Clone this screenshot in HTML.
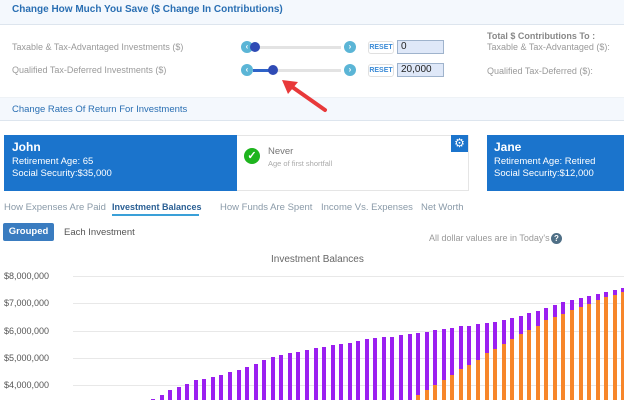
<!DOCTYPE html>
<html><head><meta charset="utf-8"><style>
*{margin:0;padding:0;box-sizing:border-box}
body{width:624px;height:400px;overflow:hidden;background:#fff;font-family:"Liberation Sans",sans-serif;position:relative}
.a{position:absolute;white-space:nowrap}
.hdr{position:absolute;left:0;width:624px;background:#f4f8fd;border-bottom:1px solid #dde5ee}
.lbl{color:#9a9a9a;font-size:9px}
.btn{position:absolute;width:12px;height:12px;border-radius:50%;background:#5bb5d6;color:#fff;font-size:8px;line-height:12px;text-align:center;font-weight:bold}
.track{position:absolute;height:3px;background:#e3e3e3}
.thumb{position:absolute;width:10px;height:10px;border-radius:50%;background:#2f4bb5}
.reset{position:absolute;width:26px;height:13px;border:1px solid #e0e0e0;border-radius:3px;background:#fff;color:#3a8ad6;font-size:7px;text-align:center;line-height:12px;font-weight:bold}
.inp{position:absolute;width:47px;height:14px;background:#dfe8f8;border:1px solid #9fb3cc;font-size:10px;padding-left:3px;line-height:12px;color:#222}
.card{position:absolute;background:#1b74cc;color:#fff}
.tab{position:absolute;top:202px;font-size:9.5px;color:#8a9aa8}
.gl{position:absolute;left:73px;width:551px;height:1px;background:#e8e8e8}
.yl{position:absolute;left:4px;font-size:9px;color:#555}
</style></head><body>
<div class="hdr" style="top:0;height:25px"></div>
<div class="a" style="left:12px;top:4px;font-size:10px;color:#2a6fb3;font-weight:bold">Change How Much You Save ($ Change In Contributions)</div>
<div class="a lbl" style="left:12px;top:42px">Taxable &amp; Tax-Advantaged Investments ($)</div>
<div class="a lbl" style="left:12px;top:65px">Qualified Tax-Deferred Investments ($)</div>
<div class="track" style="left:253px;top:46px;width:88px"></div>
<div class="track" style="left:253px;top:69px;width:88px"></div>
<div class="a" style="left:253px;top:69px;width:20px;height:3px;background:#2f63c8"></div>
<div class="btn" style="left:241px;top:41px">‹</div>
<div class="btn" style="left:344px;top:41px">›</div>
<div class="btn" style="left:241px;top:64px">‹</div>
<div class="btn" style="left:344px;top:64px">›</div>
<div class="thumb" style="left:250px;top:42px"></div>
<div class="thumb" style="left:268px;top:65px"></div>
<div class="reset" style="left:368px;top:41px">RESET</div>
<div class="reset" style="left:368px;top:64px">RESET</div>
<div class="inp" style="left:397px;top:40px">0</div>
<div class="inp" style="left:397px;top:63px">20,000</div>
<div class="a" style="left:487px;top:31px;font-size:9px;color:#888;font-weight:bold">Total $ Contributions To :</div>
<div class="a lbl" style="left:487px;top:42px">Taxable &amp; Tax-Advantaged ($):</div>
<div class="a lbl" style="left:487px;top:66px">Qualified Tax-Deferred ($):</div>
<div class="hdr" style="top:97px;height:24px;border-top:1px solid #eef2f6"></div>
<div class="a" style="left:12px;top:104px;font-size:9.5px;color:#2a6fb3">Change Rates Of Return For Investments</div>
<svg class="a" style="left:270px;top:70px" width="70" height="50"><line x1="55" y1="40" x2="18" y2="14" stroke="#e8393a" stroke-width="4" stroke-linecap="round"/><polygon points="12,10 28,12 18,24" fill="#e8393a"/></svg>
<div class="card" style="left:4px;top:135px;width:233px;height:56px"></div>
<div class="a" style="left:12px;top:140px;font-size:12px;color:#fff;font-weight:bold">John</div>
<div class="a" style="left:12px;top:156px;font-size:9.5px;color:#fff">Retirement Age: 65</div>
<div class="a" style="left:12px;top:168px;font-size:9.5px;color:#fff">Social Security:$35,000</div>
<div class="a" style="left:237px;top:135px;width:232px;height:56px;border:1px solid #e5e5e5;border-left:none"></div>
<div class="a" style="left:244px;top:148px;width:16px;height:16px;border-radius:50%;background:#1eb41e;color:#fff;font-size:11px;text-align:center;line-height:16px;font-weight:bold">✓</div>
<div class="a" style="left:268px;top:146px;font-size:9.5px;color:#777">Never</div>
<div class="a" style="left:268px;top:159px;font-size:7.5px;color:#aaa">Age of first shortfall</div>
<div class="a" style="left:451px;top:135px;width:17px;height:17px;background:#1b74cc;color:#fff;font-size:12px;text-align:center;line-height:17px">⚙</div>
<div class="card" style="left:487px;top:135px;width:137px;height:56px"></div>
<div class="a" style="left:494px;top:140px;font-size:12px;color:#fff;font-weight:bold">Jane</div>
<div class="a" style="left:494px;top:156px;font-size:9.5px;color:#fff">Retirement Age: Retired</div>
<div class="a" style="left:494px;top:168px;font-size:9.5px;color:#fff">Social Security:$12,000</div>
<div class="tab" style="left:4px">How Expenses Are Paid</div>
<div class="tab" style="left:112px;color:#2a5f94;font-weight:bold;font-size:9px">Investment Balances</div>
<div class="a" style="left:112px;top:214px;width:87px;height:2px;background:#3aa0d8"></div>
<div class="tab" style="left:220px">How Funds Are Spent</div>
<div class="tab" style="left:321px">Income Vs. Expenses</div>
<div class="tab" style="left:421px">Net Worth</div>
<div class="a" style="left:3px;top:223px;width:51px;height:18px;background:#3a7cc0;border-radius:2px;color:#fff;font-size:9.5px;font-weight:bold;text-align:center;line-height:18px">Grouped</div>
<div class="a" style="left:64px;top:227px;font-size:9.5px;color:#555">Each Investment</div>
<div class="a" style="left:429px;top:233px;font-size:9px;color:#999">All dollar values are in Today's $</div>
<div class="a" style="left:551px;top:233px;width:11px;height:11px;border-radius:50%;background:#4f6f86;color:#fff;font-size:8px;text-align:center;line-height:11px;font-weight:bold">?</div>
<div class="a" style="left:271px;top:254px;font-size:10px;color:#666">Investment Balances</div>
<div class="gl" style="top:276px"></div><div class="yl" style="top:271px">$8,000,000</div>
<div class="gl" style="top:303px"></div><div class="yl" style="top:298px">$7,000,000</div>
<div class="gl" style="top:331px"></div><div class="yl" style="top:326px">$6,000,000</div>
<div class="gl" style="top:358px"></div><div class="yl" style="top:353px">$5,000,000</div>
<div class="gl" style="top:385px"></div><div class="yl" style="top:380px">$4,000,000</div>
<div id="bars"></div>
<script>
var T=[399,395,390,387,384,380,379,377,375,372,370,367,364,360,357,355,353,352,350,348,347,345,344,343,341,339,338,337,337,335,334,333,331.5,330,329,328,326,326,324,323,322,320,318,316,313,311,308,305,302,300,298,296,294,292,290,288];
var O={31:395,32:390,33:385,34:380,35:375,36:369,37:365,38:360,39:353,40:349,41:344,42:339,43:334,44:330,45:326,46:320,47:317,48:314,49:310,50:307,51:304,52:300,53:297,54:295,55:292};
var h='';
for(var i=0;i<T.length;i++){var x=151+i*8.55;var t=T[i];
h+='<div class="a" style="left:'+x.toFixed(1)+'px;top:'+t+'px;width:4px;height:'+(400-t)+'px;background:#9b1ff0"></div>';
if(O[i]){var o=O[i];h+='<div class="a" style="left:'+x.toFixed(1)+'px;top:'+o+'px;width:4px;height:'+(400-o)+'px;background:#f7862a"></div>';}}
document.getElementById('bars').innerHTML=h;
</script>
</body></html>
